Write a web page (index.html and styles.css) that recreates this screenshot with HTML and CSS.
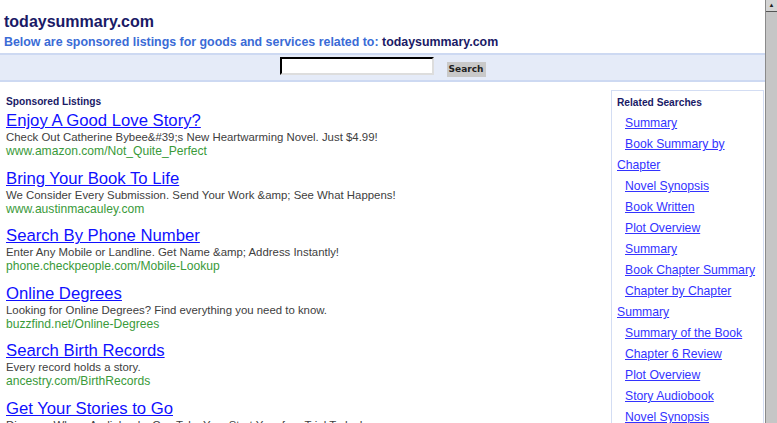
FILE: index.html
```html
<!DOCTYPE html>
<html lang="en">
<head>
    <meta charset="UTF-8">
    <meta name="viewport" content="width=device-width, initial-scale=1.0">
    <title>todaysummary.com</title>
    <link rel="stylesheet" href="styles.css">
</head>
<body>
<div class="window">
    <div class="page">
        <div class="header">
            <h1>todaysummary.com</h1>
            <p class="sub">Below are sponsored listings for goods and services related to: <span>todaysummary.com</span></p>
        </div>

        <form class="searchbar">
            <input type="text" class="search-input">
            <button type="button" class="search-btn">Search</button>
        </form>

        <div class="main">
            <div class="listings">
                <h3>Sponsored Listings</h3>

                <div class="ad">
                    <a href="#" class="ad-title">Enjoy A Good Love Story?</a>
                    <div class="ad-desc">Check Out Catherine Bybee&amp;#39;s New Heartwarming Novel. Just $4.99!</div>
                    <div class="ad-url">www.amazon.com/Not_Quite_Perfect</div>
                </div>
                <div class="ad">
                    <a href="#" class="ad-title">Bring Your Book To Life</a>
                    <div class="ad-desc">We Consider Every Submission. Send Your Work &amp;amp; See What Happens!</div>
                    <div class="ad-url">www.austinmacauley.com</div>
                </div>
                <div class="ad">
                    <a href="#" class="ad-title">Search By Phone Number</a>
                    <div class="ad-desc">Enter Any Mobile or Landline. Get Name &amp;amp; Address Instantly!</div>
                    <div class="ad-url">phone.checkpeople.com/Mobile-Lookup</div>
                </div>
                <div class="ad">
                    <a href="#" class="ad-title">Online Degrees</a>
                    <div class="ad-desc">Looking for Online Degrees? Find everything you need to know.</div>
                    <div class="ad-url">buzzfind.net/Online-Degrees</div>
                </div>
                <div class="ad">
                    <a href="#" class="ad-title">Search Birth Records</a>
                    <div class="ad-desc">Every record holds a story.</div>
                    <div class="ad-url">ancestry.com/BirthRecords</div>
                </div>
                <div class="ad">
                    <a href="#" class="ad-title">Get Your Stories to Go</a>
                    <div class="ad-desc">Discover Where Audiobooks Can Take You. Start Your free Trial Today!</div>
                    <div class="ad-url">www.audible.com</div>
                </div>
            </div>

            <div class="related">
                <h3>Related Searches</h3>
                <ul>
                    <li><a href="#">Summary</a></li>
                    <li><a href="#">Book Summary by Chapter</a></li>
                    <li><a href="#">Novel Synopsis</a></li>
                    <li><a href="#">Book Written</a></li>
                    <li><a href="#">Plot Overview</a></li>
                    <li><a href="#">Summary</a></li>
                    <li><a href="#">Book Chapter Summary</a></li>
                    <li><a href="#">Chapter by Chapter Summary</a></li>
                    <li><a href="#">Summary of the Book</a></li>
                    <li><a href="#">Chapter 6 Review</a></li>
                    <li><a href="#">Plot Overview</a></li>
                    <li><a href="#">Story Audiobook</a></li>
                    <li><a href="#">Novel Synopsis</a></li>
                    <li><a href="#">Book Reviews</a></li>
                </ul>
            </div>
        </div>
    </div>

    <div class="scrollbar">
        <div class="scroll-up">&#9650;</div>
        <div class="scroll-thumb"></div>
    </div>
</div>
</body>
</html>
```

FILE: styles.css
```css
body {
    margin: 0;
    font-family: "Liberation Sans", Arial, sans-serif;
    background-color: white;
    overflow: hidden;
}

.window {
    display: flex;
    height: 423px;
    overflow: hidden;
}

.page {
    flex: 1;
    min-width: 0;
}

/* Header */
.header {
    padding: 12px 4px 0 4px;
}

h1 {
    margin: 0;
    font-size: 16px;
    line-height: 19px;
    color: #1a1a66;
}

.sub {
    margin: 3px 0 3px 0;
    font-size: 12.4px;
    line-height: 16px;
    font-weight: bold;
    color: #3a6bd6;
}

.sub span {
    color: #1a1a66;
}

/* Search band */
.searchbar {
    margin: 0;
    height: 25px;
    display: flex;
    justify-content: center;
    align-items: center;
    gap: 13px;
    background-color: #e5ebf8;
    border-top: 2px solid #cdd9f2;
    border-bottom: 2px solid #cdd9f2;
}

.search-input {
    width: 146px;
    height: 12px;
    padding: 1px 2px;
    border: 2px inset #999;
    border-top-color: #555;
    border-left-color: #555;
    border-right-color: #ddd;
    border-bottom-color: #ddd;
    background: white;
    margin-top: -3px;
}

.search-btn {
    width: 39px;
    height: 15px;
    padding: 0;
    border: none;
    background-color: #c9c9c9;
    font-family: "DejaVu Sans", Verdana, sans-serif;
    font-size: 9px;
    font-weight: bold;
    color: #222;
    margin-top: 3px;
}

/* Main area */
.main {
    display: flex;
    gap: 9px;
    padding: 8px 1px 0 6px;
}

.listings {
    flex: 1;
    padding-top: 3px;
}

h3 {
    margin: 0;
    font-size: 10.2px;
    line-height: 13px;
    color: #1a1a66;
}

.listings h3 {
    margin-top: 2px;
    margin-bottom: 3px;
}

.ad {
    margin-bottom: 10.6px;
}

.ad-title {
    display: block;
    font-size: 16.7px;
    line-height: 19px;
    color: #1010ff;
}

.ad-desc {
    font-size: 11.4px;
    line-height: 14px;
    color: #404040;
}

.ad-url {
    font-size: 12.1px;
    line-height: 14px;
    color: #3a9a3a;
}

/* Related searches box */
.related {
    width: 145px;
    flex-shrink: 0;
    border: 1px solid #d3ddf3;
    padding: 4px 1px 0 5px;
}

.related h3 {
    margin-top: 1px;
    margin-bottom: 4px;
}

.related ul {
    list-style: none;
    margin: 0;
    padding: 0;
}

.related li {
    font-size: 12.2px;
    line-height: 21px;
    text-indent: 8px;
}

.related a {
    color: #3333ff;
}

/* Fake scrollbar */
.scrollbar {
    width: 11px;
    flex-shrink: 0;
    background-color: #c3c3c3;
    border-left: 1px solid #8a8a8a;
    display: flex;
    flex-direction: column;
}

.scroll-up {
    height: 11px;
    font-size: 6px;
    line-height: 11px;
    text-align: center;
    color: #222;
    background-color: #d4d4d4;
    border-bottom: 1px solid #555;
}

.scroll-thumb {
    flex: 1;
    background-color: #c6c6c6;
}
```
